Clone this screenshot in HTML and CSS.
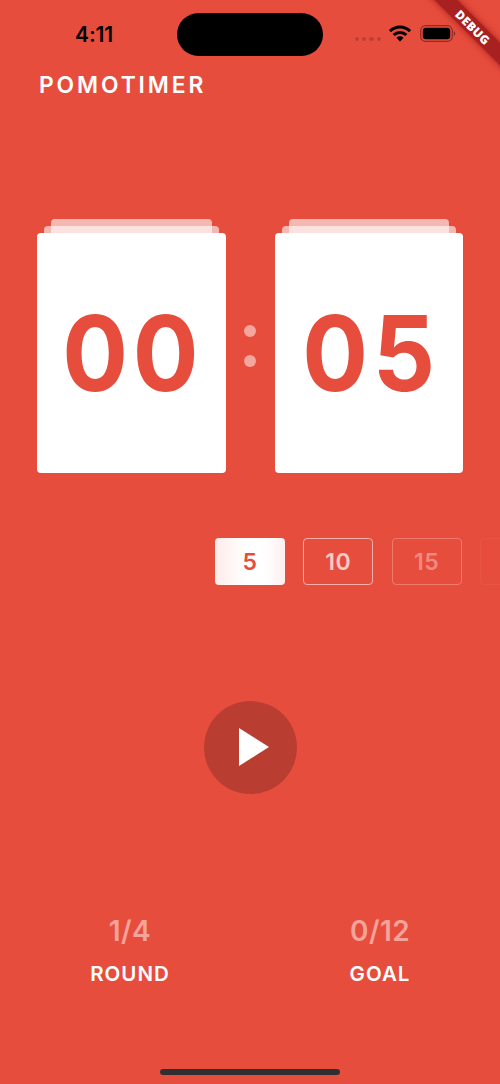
FILE: index.html
```html
<!DOCTYPE html>
<html lang="en">
<head>
<meta charset="utf-8">
<title>Pomotimer</title>
<link rel="stylesheet" href="styles.css">
</head>
<body>
<div class="screen">
  <header class="status">
    <span class="clock">4:11</span>
    <span class="island"></span>
    <span class="indicators">
      <span class="cell"><i></i><i></i><i></i><i></i></span>
      <svg class="wifi" width="22" height="17" viewBox="0 0 22 17">
        <g fill="none" stroke="#000" stroke-width="3"><path d="M1 6.2a14.2 14.2 0 0 1 20 0"/><path d="M4.7 10a8.9 8.9 0 0 1 12.6 0"/></g>
        <path d="M7.4 12.8a5.1 5.1 0 0 1 7.2 0L11 16.4z"/>
      </svg>
      <svg class="battery" width="36" height="17" viewBox="0 0 36 17">
        <rect x=".7" y=".7" width="31.6" height="15.6" rx="4.8" fill="none" stroke="#8a2e25" stroke-width="1.2"/>
        <rect x="2.8" y="2.8" width="27.4" height="11.4" rx="3"/>
        <path d="M33.8 6v5c2-.8 2-4.200 0-5z" fill="#8a2e25"/>
      </svg>
    </span>
  </header>
  <h1 class="title">POMOTIMER</h1>
  <main>
    <section class="timer">
      <div class="card"><span class="digits">00</span></div>
      <div class="colon"><i></i><i></i></div>
      <div class="card"><span class="digits">05</span></div>
    </section>
    <section class="options">
      <button class="option selected">5</button>
      <button class="option near">10</button>
      <button class="option far">15</button>
      <button class="option edge"></button>
    </section>
    <button class="play" aria-label="Play">
      <svg width="30" height="38" viewBox="0 0 30 38"><path d="M0 0 30 19 0 38z" fill="#fff"/></svg>
    </button>
    <section class="stats">
      <div class="stat"><span class="value">1/4</span><span class="label">ROUND</span></div>
      <div class="stat"><span class="value">0/12</span><span class="label">GOAL</span></div>
    </section>
  </main>
  <div class="home"></div>
  <div class="debug">DEBUG</div>
</div>
</body>
</html>
```
FILE: styles.css
```css
* { box-sizing: border-box; }
body { margin: 0; background: #e74d3d; font-family: Inter, "Liberation Sans", sans-serif; }
button { font: inherit; padding: 0; border: 0; }
.screen { position: relative; width: 500px; height: 1084px; overflow: hidden; display: flex; flex-direction: column; color: #fff; }
.status { height: 56px; padding: 13px 43px 0 75px; display: flex; align-items: flex-start; flex: none; }
.clock { width: 102px; padding-top: 8px; font-size: 21px; line-height: 27px; font-weight: 600; letter-spacing: -.1px; color: #000; }
.island { width: 146px; height: 43px; border-radius: 22px; background: #000; }
.indicators { display: flex; margin: 12px 0 0 32px; }
.cell { display: flex; gap: 3px; width: 34px; padding-top: 12px; }
.cell i { width: 4.200px; height: 4.200px; border-radius: 50%; background: #bd4034; }
.wifi { margin-right: 9px; }
.title { margin: 15px 0 0 39px; font-size: 22.800px; line-height: 28px; font-weight: 600; letter-spacing: 2.900px; }
main { display: flex; flex-direction: column; align-items: center; }
.timer { display: flex; width: 426px; margin-top: 134px; justify-content: space-between; align-items: center; }
.card { position: relative; width: 188.500px; height: 240px; border-radius: 4px; background: #fff; color: #e74d3d; display: flex; align-items: center; justify-content: center; }
.card::before, .card::after { content: ""; position: absolute; border-radius: 4px 4px 0 0; background: rgba(255,255,255,.6); }
.card::before { left: 7px; right: 7px; top: -7px; height: 7px; }
.card::after { left: 14px; right: 14px; top: -14px; height: 14px; }
.digits { font-size: 105px; line-height: 120px; font-weight: 700; letter-spacing: 5px; margin-left: 4px; transform: scaleX(.93); }
.colon { display: flex; flex-direction: column; gap: 18px; margin-top: -15px; }
.colon i { width: 12px; height: 12px; border-radius: 50%; background: #f5a69f; }
.options { display: flex; gap: 18.300px; width: 285px; margin: 65px 0 0 215px; }
.option { flex: none; width: 70px; height: 47px; border: 1.500px solid #fff; border-radius: 4px; background: transparent; font-size: 23px; line-height: 28px; font-weight: 600; letter-spacing: .5px; }
.selected { background: linear-gradient(90deg, #fdecea, #fff 45%, #fff 70%, #fdf0ee); color: #e74d3d; border: 0; }
.near { border-color: #f6b0a9; color: #f9cbc6; }
.far { border-color: #ee796d; color: #f08a80; }
.edge { border-color: #e85547; }
.play { display: flex; align-items: center; justify-content: center; width: 93px; height: 93px; margin-top: 116px; border-radius: 50%; background: #b93e31; }
.play svg { margin: -1px 0 0 8px; }
.stats { display: flex; width: 500px; margin-top: 119px; padding-left: 5px; }
.stat { flex: none; width: 250px; display: flex; flex-direction: column; align-items: center; }
.value { font-size: 28px; line-height: 36px; font-weight: 600; color: #f4a39b; letter-spacing: .4px; }
.label { margin-top: 10px; font-size: 20.500px; line-height: 29px; font-weight: 600; letter-spacing: 1px; }
.home { position: absolute; left: 160px; bottom: 9px; width: 180px; height: 6px; border-radius: 3px; background: #302f30; }
.debug { position: absolute; left: 413px; top: 19px; width: 120px; height: 16px; line-height: 17px; transform: rotate(45deg); background: #a82020; box-shadow: 0 0 7px rgba(140,15,10,.75); text-align: center; font-family: "Noto Sans", sans-serif; font-size: 12px; font-weight: 900; letter-spacing: .3px; }
```
